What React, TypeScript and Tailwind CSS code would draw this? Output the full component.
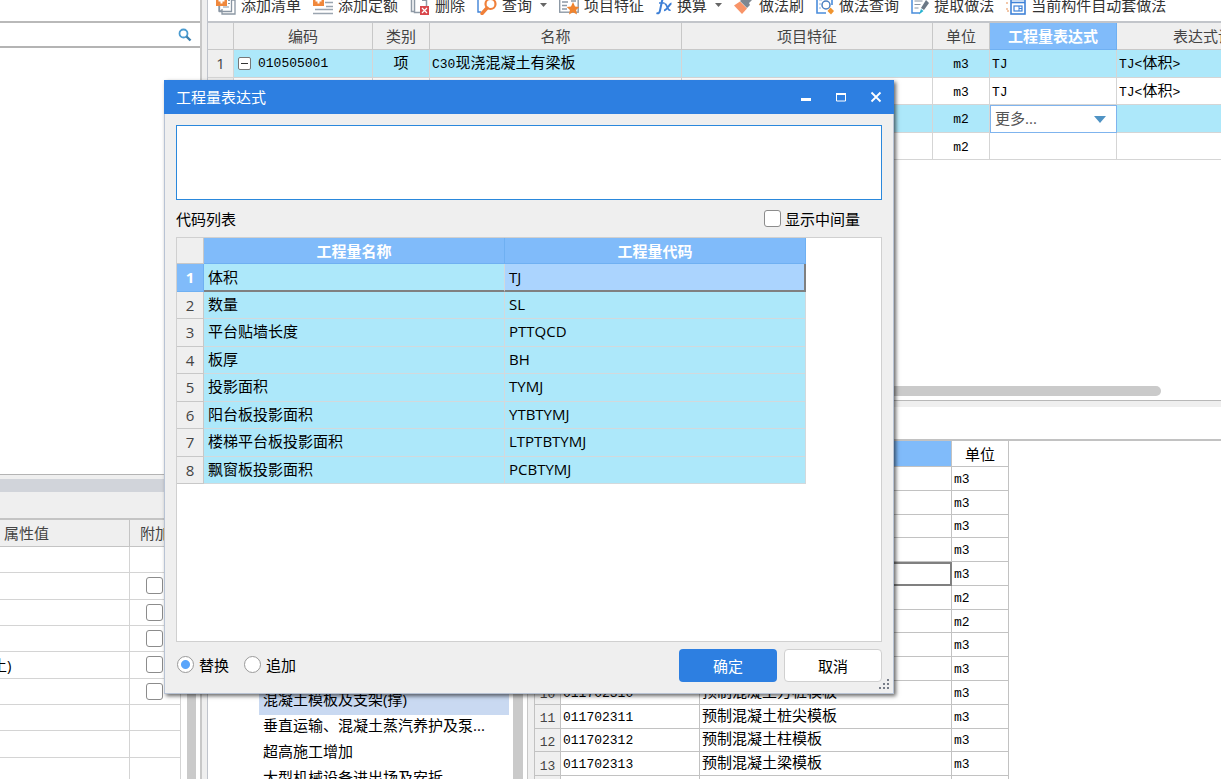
/**
 * @file App.tsx
 * @description Écran de métré : tableau des ouvrages et dialogue « 工程量表达式 ».
 */

import { useState } from 'react'
import { clsx } from 'clsx'

interface ToolItem {
  label: string
  icon: React.ReactNode
  menu?: boolean
}

interface BillRow {
  code?: string
  kind?: string
  name?: string
  unit: string
  expr?: string
  desc?: string
}

/* ── ICÔNES ── */

function PlusSheet({ lines }: { lines?: boolean }) {
  return (
    <svg width="20" height="20" viewBox="0 0 20 20" fill="none">
      {lines ? (
        <path d="M12 7.5h8M13 11.5h7M2 14.5h18M0 18.5h20" stroke="#9aa5b0" strokeWidth="1.5" />
      ) : (
        <>
          <path d="M3 10v6h3M6 14v5h13V5h-3" stroke="#8a96a3" strokeWidth="1.3" />
          <path d="M3.5 8v8.5h12V3" stroke="#8a96a3" strokeWidth="1.3" />
          <path d="M12 8.5h2M7 12h6M12 5.5h2" stroke="#8a96a3" />
        </>
      )}
      <rect x="0" y="0" width="11" height="11" fill="#f0883c" />
      <path d="M5.5 2.5v6M2.5 5.5h6" stroke="#fff" strokeWidth="2" />
    </svg>
  )
}

function DeleteIcon() {
  return (
    <svg width="20" height="20" viewBox="0 0 20 20" fill="none">
      <path d="M1.5 3v13.5H4" stroke="#8f9aa6" strokeWidth="1.5" />
      <path d="M4.5 1.5h8l4 4V11M4.5 1.5v16H10" stroke="#8f9aa6" strokeWidth="1.5" />
      <path d="M12 1v5h5z" fill="#8f9aa6" />
      <rect x="10" y="11" width="9" height="9" fill="#d9474c" />
      <path d="M12 13l5 5M17 13l-5 5" stroke="#fff" strokeWidth="1.2" />
    </svg>
  )
}

function FindIcon() {
  return (
    <svg width="20" height="20" viewBox="0 0 20 20" fill="none">
      <path d="M4 1H1v16h3" stroke="#3f83d8" strokeWidth="1.4" />
      <circle cx="13.5" cy="9" r="5" stroke="#f0803a" strokeWidth="2.2" />
      <path d="M10 13l-5 5.5" stroke="#f0803a" strokeWidth="3.4" strokeLinecap="round" />
    </svg>
  )
}

function FeatureIcon() {
  return (
    <svg width="20" height="20" viewBox="0 0 20 20" fill="none">
      <rect x="0.7" y="2.7" width="18.5" height="14.5" stroke="#8d99a6" strokeWidth="1.4" />
      <path d="M3 7h6M3 10.5h5M3 14h5M12 6h5" stroke="#8d99a6" strokeWidth="1.3" />
      <path d="M14 7l2 4.5 4.3.5-3.2 3 .9 4.5-4-2.2-4 2.2.9-4.5-3.2-3 4.3-.5z" fill="#f0842f" />
    </svg>
  )
}

function FxIcon() {
  return (
    <svg width="16" height="20" viewBox="0 0 16 20" fill="none" stroke="#3d7fd6">
      <path d="M9.5 3.5C7 2.5 6.3 4.5 5.8 7L4 15.5C3.5 18 2.5 18.8 0.5 18" strokeWidth="2" />
      <path d="M3 8h5.5" strokeWidth="1.5" />
      <path d="M8.5 9c2.5-1 3 7.5 6 6M15.5 8.5c-2 0-4.5 7-7.5 6.8" strokeWidth="1.8" />
    </svg>
  )
}

function BrushIcon() {
  return (
    <svg width="20" height="20" viewBox="0 0 20 20">
      <path d="M15 0l4 4-4 4 1 2-3 3-7-7 3-3 2 1z" fill="#7d8791" />
      <path d="M6 6.5l7 7L8 19 0 10.5z" fill="#f89468" />
    </svg>
  )
}

function QueryDocIcon() {
  return (
    <svg width="18" height="20" viewBox="0 0 18 20" fill="none">
      <path d="M1 1v17h9M1 1h15v9" stroke="#4a8ddb" strokeWidth="1.6" />
      <path d="M3 5h3M3 9h2M3 13h2" stroke="#8db6e6" />
      <circle cx="10" cy="10" r="4" stroke="#4a7fc0" strokeWidth="1.5" />
      <path d="M14.5 12.5l3.5 3.5-3 3.5-3.5-3.5z" fill="#f0942f" />
    </svg>
  )
}

function ExtractIcon() {
  return (
    <svg width="18" height="20" viewBox="0 0 18 20" fill="none">
      <path d="M9 18H1V1h11" stroke="#4a8ddb" strokeWidth="1.5" />
      <path d="M3.5 6h8M3.5 9.5h6M3.5 13h4" stroke="#8795a4" strokeWidth="1.2" />
      <path d="M15 5l3 3-5 7-3-2z" fill="#6b7886" />
      <path d="M10 14l2.5 2L8 19.5z" fill="#29b3d0" />
    </svg>
  )
}

function AutoIcon() {
  return (
    <svg width="20" height="20" viewBox="0 0 20 20" fill="none">
      <path d="M0 4h3M0 8h3M1 13v3h3" stroke="#e69055" strokeDasharray="2 1" />
      <rect x="5" y="4.5" width="14" height="14.5" stroke="#3f83d8" strokeWidth="1.6" />
      <path d="M5 7.5h14" stroke="#3f83d8" strokeWidth="1.6" />
      <rect x="8" y="11" width="8" height="5" stroke="#3f83d8" strokeWidth="1.2" />
      <path d="M13 11v5M13 13.5h3" stroke="#3f83d8" />
    </svg>
  )
}

/* ── DONNÉES ── */

const tools: ToolItem[] = [
  { label: '添加清单', icon: <PlusSheet /> },
  { label: '添加定额', icon: <PlusSheet lines /> },
  { label: '删除', icon: <DeleteIcon /> },
  { label: '查询', icon: <FindIcon />, menu: true },
  { label: '项目特征', icon: <FeatureIcon /> },
  { label: '换算', icon: <FxIcon />, menu: true },
  { label: '做法刷', icon: <BrushIcon /> },
  { label: '做法查询', icon: <QueryDocIcon /> },
  { label: '提取做法', icon: <ExtractIcon /> },
  { label: '当前构件自动套做法', icon: <AutoIcon /> },
]

const billRows: BillRow[] = [
  { code: '010505001', kind: '项', name: 'C30现浇混凝土有梁板', unit: 'm3', expr: 'TJ', desc: 'TJ<体积>' },
  { unit: 'm3', expr: 'TJ', desc: 'TJ<体积>' },
  { unit: 'm2' },
  { unit: 'm2' },
]

const libraryRows = [
  { unit: 'm3' },
  { unit: 'm3' },
  { unit: 'm3' },
  { unit: 'm3' },
  { unit: 'm3' },
  { unit: 'm2' },
  { unit: 'm2' },
  { unit: 'm3' },
  { unit: 'm3' },
  { unit: 'm3', code: '011702310', name: '预制混凝土方桩模板' },
  { unit: 'm3', code: '011702311', name: '预制混凝土桩尖模板' },
  { unit: 'm3', code: '011702312', name: '预制混凝土柱模板' },
  { unit: 'm3', code: '011702313', name: '预制混凝土梁模板' },
  { unit: 'm3', code: '011702314', name: '预制混凝土屋架模板' },
]

const chapters = ['混凝土模板及支架(撑)', '垂直运输、混凝土蒸汽养护及泵...', '超高施工增加', '大型机械设备进出场及安拆']

const quantities = [
  ['体积', 'TJ'],
  ['数量', 'SL'],
  ['平台贴墙长度', 'PTTQCD'],
  ['板厚', 'BH'],
  ['投影面积', 'TYMJ'],
  ['阳台板投影面积', 'YTBTYMJ'],
  ['楼梯平台板投影面积', 'LTPTBTYMJ'],
  ['飘窗板投影面积', 'PCBTYMJ'],
]

const properties = [
  { value: '', check: false },
  { value: '', check: true },
  { value: '', check: true },
  { value: '', check: true },
  { value: '土)', check: true },
  { value: '', check: true },
  { value: '', check: false },
  { value: '', check: false },
  { value: '', check: false },
]

/* Chasse fixe pour le latin, taille normale pour le chinois */
function Mono({ text = '' }: { text?: string }) {
  return (
    <>
      {text.split(/([\x20-\x7e]+)/).filter(Boolean).map((part, i) => (
        <span key={i} className={clsx(/^[\x20-\x7e]/.test(part) && "font-['Liberation_Mono'] text-[13px] leading-none")}>
          {part}
        </span>
      ))}
    </>
  )
}

const checkboxClass = 'block size-[17px] shrink-0 appearance-none rounded-[3px] border border-[#8c8c8c] bg-white checked:bg-[#59a5fb]'
const radioClass =
  'size-[17px] shrink-0 appearance-none rounded-full border border-[#9a9a9a] bg-white checked:bg-[radial-gradient(circle,#59a5fb_0_4px,white_5px)]'

function PropertyPanel() {
  return (
    <aside className="flex w-[202px] shrink-0 flex-col border-r-2 border-[#c8c8c8] bg-white">
      <div className="h-[23px] shrink-0 border-b-2 border-[#b9b9b9]" />
      <div className="flex h-[25px] shrink-0 items-center border-b-2 border-[#b4b4b4] pr-2">
        <input aria-label="搜索" className="min-w-0 flex-1 px-2 outline-none" />
        <svg width="14" height="14" viewBox="0 0 14 14" fill="none">
          <circle cx="5.5" cy="5.5" r="4" stroke="#4a9bd0" strokeWidth="1.8" />
          <path d="M8.5 8.5l4 4" stroke="#3b7fae" strokeWidth="2.4" />
        </svg>
      </div>
      <div className="h-[427px] shrink-0 border-b border-[#b4b4b4]" />
      <div className="h-1 shrink-0 bg-[#efefef]" />
      <div className="h-[13px] shrink-0 bg-[#d1d4da]" />
      <div className="h-[28px] shrink-0 border-b-2 border-[#c4c4c4] bg-[#efefef]" />
      <div className="flex min-h-0 flex-1 justify-between overflow-hidden">
        <table className="h-[264px] w-[181px] table-fixed border-separate border-spacing-0">
          <thead>
            <tr className="h-[27px] bg-[#efefef] text-left text-[#444]">
              <th className="w-[130px] border-r border-b border-[#c4c4c4] pl-1 font-normal">属性值</th>
              <th className="overflow-hidden border-r border-b border-[#c4c4c4] pl-[10px] font-normal whitespace-nowrap">附加</th>
            </tr>
          </thead>
          <tbody>
            {properties.map((p, i) => (
              <tr key={i} className="h-[26px]">
                <td className="border-r border-b border-[#d4d4d4] py-0 -indent-2">{p.value}</td>
                <td className="border-r border-b border-[#d4d4d4] py-0 pl-4">
                  {p.check && <input type="checkbox" aria-label="附加" className={checkboxClass} />}
                </td>
              </tr>
            ))}
          </tbody>
        </table>
        <div className="mr-1 w-[9px] bg-[#cacaca]" />
      </div>
    </aside>
  )
}

function Toolbar() {
  return (
    <div className="flex h-[23px] shrink-0 items-end overflow-hidden border-b-2 border-[#c2c5ca] pl-[2px]">
      {tools.map(tool => (
        <button key={tool.label} className="flex h-8 shrink-0 items-center gap-[5px] px-[6px] whitespace-nowrap text-[#333]">
          {tool.icon}
          {tool.label}
          {tool.menu && (
            <svg width="7" height="4" viewBox="0 0 7 4" className="ml-[3px]">
              <path d="M0 0h7L3.5 4z" fill="#666" />
            </svg>
          )}
        </button>
      ))}
    </div>
  )
}

function BillTable() {
  const head = 'border-r border-b border-[#c8c8c8] font-normal'
  const cell = 'border-r border-b border-[#d5d5d5] pt-0 pb-[2px]'
  return (
    <table className="h-[137px] w-[1097px] table-fixed border-separate border-spacing-0 leading-5 text-black">
      <colgroup>
        <col className="w-[26px]" />
        <col className="w-[139px]" />
        <col className="w-[57px]" />
        <col className="w-[252px]" />
        <col className="w-[251px]" />
        <col className="w-[57px]" />
        <col className="w-[127px]" />
        <col className="w-[188px]" />
      </colgroup>
      <thead>
        <tr className="h-[27px] bg-[#efefef] text-[#444]">
          <th className={head} />
          <th className={head}>编码</th>
          <th className={head}>类别</th>
          <th className={head}>名称</th>
          <th className={head}>项目特征</th>
          <th className={head}>单位</th>
          <th className="border-r border-b border-[#6fb0f2] bg-[#80bbfa] font-bold text-white">工程量表达式</th>
          <th className={head}>表达式说明</th>
        </tr>
      </thead>
      <tbody>
        {billRows.map((row, i) => (
          <tr key={i} className={clsx('h-[27px]', i % 2 === 0 ? 'bg-[#ade8fa]' : 'bg-white')}>
            <td className="border-r border-b border-[#d5d5d5] bg-[#efefef] py-0 text-center text-[#444]">{i + 1}</td>
            <td className="border-r border-b border-[#d5d5d5] py-0 pl-1">
              {row.code && (
                <div className="flex items-center gap-[7px]">
                  <button aria-label="折叠" className="flex size-[13px] items-center justify-center rounded-[2px] border border-[#777] bg-white">
                    <span className="h-px w-[7px] bg-[#333]" />
                  </button>
                  <Mono text={row.code} />
                </div>
              )}
            </td>
            <td className={clsx(cell, 'text-center')}>{row.kind}</td>
            <td className={clsx(cell, 'pl-[2px]')}><Mono text={row.name} /></td>
            <td className={cell} />
            <td className={clsx(cell, 'text-center')}><Mono text={row.unit} /></td>
            {i === 2 ? (
              <td className="border border-[#7fb4ee] bg-white px-0 pt-0 pb-[2px]">
                <div className="relative">
                  <select aria-label="工程量表达式" className="block w-full appearance-none bg-transparent pl-1 leading-5 text-[#555] outline-none">
                    <option>更多...</option>
                  </select>
                  <svg width="12" height="7" viewBox="0 0 12 7" className="pointer-events-none absolute top-2 right-[10px]">
                    <path d="M0 0h12L6 7z" fill="#4f93c4" />
                  </svg>
                </div>
              </td>
            ) : (
              <td className={clsx(cell, 'pl-[2px]')}><Mono text={row.expr} /></td>
            )}
            <td className={clsx(cell, 'pl-[2px]')}><Mono text={row.desc} /></td>
          </tr>
        ))}
      </tbody>
    </table>
  )
}

function LibraryTable() {
  const cell = 'border-r border-b border-[#c2c2c2] pt-0 pb-[3px]'
  return (
    <table className="h-[359px] w-[475px] table-fixed border-separate border-spacing-0 border-l border-[#c2c2c2] text-black">
      <colgroup>
        <col className="w-[26px]" />
        <col className="w-[139px]" />
        <col className="w-[252px]" />
        <col className="w-[57px]" />
      </colgroup>
      <thead>
        <tr className="h-[26px]">
          <th className={clsx(cell, 'bg-[#efefef]')} />
          <th className={clsx(cell, 'bg-[#80bbfa] text-white')}>编码</th>
          <th className={clsx(cell, 'bg-[#80bbfa] text-white')}>名称</th>
          <th className="border-r border-b border-[#c2c2c2] font-normal">单位</th>
        </tr>
      </thead>
      <tbody className="leading-[18px]">
        {libraryRows.map((row, i) => (
          <tr key={i} className="h-[23px]">
            <td className="border-r border-b border-[#c2c2c2] bg-[#efefef] py-0 text-center text-[#444]"><Mono text={String(i + 1)} /></td>
            <td className={clsx(cell, 'pl-[2px]')}><Mono text={row.code} /></td>
            <td className={i === 4 ? 'border-2 border-[#808080] py-0' : clsx(cell, 'pl-[2px]')}>{row.name}</td>
            <td className={clsx(cell, 'pl-[2px]')}><Mono text={row.unit} /></td>
          </tr>
        ))}
      </tbody>
    </table>
  )
}

function ExpressionDialog() {
  const [mode, setMode] = useState('替换')
  const rowCell = 'border-r border-b border-[#d3d9dc] pt-0 pb-[2px] pl-1'
  const headCell = 'border-r border-b border-[#6fb0f2] bg-[#80bbfa] font-bold text-white'

  return (
    <div
      role="dialog"
      aria-label="工程量表达式"
      className="absolute top-20 left-[164px] w-[730px] bg-[#efefef] text-black shadow-[2px_2px_4px_rgba(0,0,0,0.6)]"
    >
      {/* ── BARRE DE TITRE ── */}
      <header className="flex h-[34px] items-center justify-between bg-[#2d7fe1] px-3 text-white">
        <h1>工程量表达式</h1>
        <div className="flex gap-[23px]">
          <button aria-label="最小化">
            <svg width="12" height="12" viewBox="0 0 12 12"><path d="M1 8.5h10" stroke="#fff" strokeWidth="3" /></svg>
          </button>
          <button aria-label="最大化">
            <svg width="12" height="12" viewBox="0 0 12 12" fill="none" stroke="#fff">
              <path d="M1.5 3v7h9V3" />
              <path d="M1 3h10" strokeWidth="2" />
            </svg>
          </button>
          <button aria-label="关闭">
            <svg width="12" height="12" viewBox="0 0 12 12"><path d="M1.5 1.5l9 9M10.5 1.5l-9 9" stroke="#fff" strokeWidth="1.8" /></svg>
          </button>
        </div>
      </header>

      <div className="border border-t-0 border-[#b8c3d4] px-[11px] pt-[11px]">
        <textarea aria-label="表达式" className="block h-[75px] w-full resize-none border border-[#2a88dc] bg-white p-1 outline-none" />

        <div className="flex h-[37px] items-center justify-between">
          <span>代码列表</span>
          <label className="flex items-center gap-1 pr-[22px]">
            <input type="checkbox" className={checkboxClass} />
            显示中间量
          </label>
        </div>

        <div className="h-[405px] border border-[#d0d0d0] bg-white">
          <table className="h-[246px] w-[629px] table-fixed border-separate border-spacing-0 leading-5">
            <thead>
              <tr className="h-[26px]">
                <th className="w-[27px] border-r border-b border-[#c8c8c8] bg-[#efefef]" />
                <th className={headCell}>工程量名称</th>
                <th className={headCell}>工程量代码</th>
              </tr>
            </thead>
            <tbody>
              {quantities.map(([name, code], i) => (
                <tr key={code} className="h-[27px] bg-[#ade8fa]">
                  <td
                    className={clsx(
                      'border-r border-b py-0 text-center',
                      i === 0 ? 'border-[#6fb0f2] bg-[#80bbfa] font-bold text-white' : 'border-[#c8c8c8] bg-[#efefef] text-[#444]'
                    )}
                  >
                    {i + 1}
                  </td>
                  <td className={i === 0 ? 'border-r border-b-2 border-r-[#d3d9dc] border-b-[#808080] py-0 pl-1' : rowCell}>{name}</td>
                  <td className={i === 0 ? 'border-r-2 border-b-2 border-[#808080] bg-[#abd4fe] py-0 pl-1' : rowCell}>{code}</td>
                </tr>
              ))}
            </tbody>
          </table>
        </div>

        <footer className="flex h-[51px] items-start pt-[7px]">
          <div className="flex h-[31px] items-center gap-[15px] pl-px">
            {['替换', '追加'].map(m => (
              <label key={m} className="flex items-center gap-[5px]">
                <input type="radio" name="mode" checked={mode === m} onChange={() => setMode(m)} className={radioClass} />
                {m}
              </label>
            ))}
          </div>
          <div className="ml-auto flex gap-[7px]">
            <button className="h-[33px] w-[98px] rounded-[4px] bg-[#2d7fe1] text-white">确定</button>
            <button className="h-[33px] w-[98px] rounded-[4px] border border-[#d0d0d0] bg-white">取消</button>
          </div>
        </footer>
      </div>

      <svg width="11" height="11" viewBox="0 0 11 11" fill="#777d88" className="absolute right-1 bottom-1">
        <path d="M8 0h2v2h-2zM8 4h2v2h-2zM4 4h2v2h-2zM8 8h2v2h-2zM4 8h2v2h-2zM0 8h2v2h-2z" />
      </svg>
    </div>
  )
}

export default function App() {
  return (
    <div className="relative flex h-screen overflow-hidden bg-[#efefef] font-['Open_Sans','Noto_Sans_CJK_SC',sans-serif] text-[15px] leading-[22px] text-black">
      <PropertyPanel />

      <main className="ml-[5px] flex min-w-0 flex-1 flex-col border-l border-[#c0c4cc] bg-white">
        <Toolbar />

        <section className="flex h-[378px] shrink-0 flex-col justify-between overflow-hidden border-b border-[#b8b8b8] pb-1">
          <BillTable />
          <div className="mr-[60px] h-[10px] rounded-full bg-[#cacaca]" />
        </section>
        <div className="h-[6px] shrink-0 bg-[#efefef]" />
        <div className="h-[34px] shrink-0 border-b-2 border-[#c2c2c2]" />

        <div className="flex min-h-0 flex-1 overflow-hidden">
          <div className="flex w-[320px] shrink-0 justify-between border-r border-[#c8c8c8] pr-1">
            <ul className="ml-[51px] w-[250px] pt-[248px]">
              {chapters.map((chapter, i) => (
                <li key={chapter} className={clsx('h-[26px] pl-1 leading-5 whitespace-nowrap', i === 0 && 'bg-[#c9d9f1]')}>
                  {chapter}
                </li>
              ))}
            </ul>
            <div className="w-[10px] bg-[#cacaca]" />
          </div>
          <div className="w-[6px] shrink-0 bg-[#efefef]" />
          <LibraryTable />
        </div>
      </main>

      <ExpressionDialog />
    </div>
  )
}
